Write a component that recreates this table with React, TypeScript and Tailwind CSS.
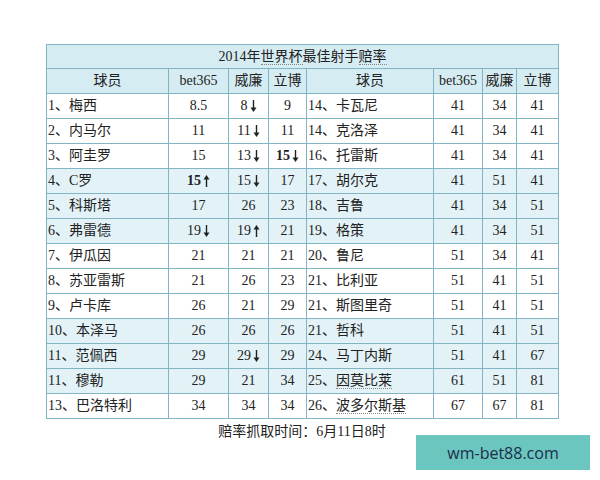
import React from 'react';

type Cell = { v: string; arrow?: 'up' | 'down'; bold?: boolean };
type Row = { name: string; dotted?: boolean; odds: Cell[] };

const c = (v: string, arrow?: 'up' | 'down', bold?: boolean): Cell => ({ v, arrow, bold });

const leftRows: Row[] = [
  { name: '1、梅西', odds: [c('8.5'), c('8', 'down'), c('9')] },
  { name: '2、内马尔', odds: [c('11'), c('11', 'down'), c('11')] },
  { name: '3、阿圭罗', odds: [c('15'), c('13', 'down'), c('15', 'down', true)] },
  { name: '4、C罗', odds: [c('15', 'up', true), c('15', 'down'), c('17')] },
  { name: '5、科斯塔', odds: [c('17'), c('26'), c('23')] },
  { name: '6、弗雷德', odds: [c('19', 'down'), c('19', 'up'), c('21')] },
  { name: '7、伊瓜因', odds: [c('21'), c('21'), c('21')] },
  { name: '8、苏亚雷斯', odds: [c('21'), c('26'), c('23')] },
  { name: '9、卢卡库', odds: [c('26'), c('21'), c('29')] },
  { name: '10、本泽马', odds: [c('26'), c('26'), c('26')] },
  { name: '11、范佩西', odds: [c('29'), c('29', 'down'), c('29')] },
  { name: '11、穆勒', odds: [c('29'), c('21'), c('34')] },
  { name: '13、巴洛特利', odds: [c('34'), c('34'), c('34')] },
];

const rightRows: Row[] = [
  { name: '14、卡瓦尼', odds: [c('41'), c('34'), c('41')] },
  { name: '14、克洛泽', odds: [c('41'), c('34'), c('41')] },
  { name: '16、托雷斯', odds: [c('41'), c('34'), c('41')] },
  { name: '17、胡尔克', odds: [c('41'), c('51'), c('41')] },
  { name: '18、吉鲁', odds: [c('41'), c('34'), c('51')] },
  { name: '19、格策', odds: [c('41'), c('34'), c('51')] },
  { name: '20、鲁尼', odds: [c('51'), c('34'), c('41')] },
  { name: '21、比利亚', odds: [c('51'), c('41'), c('51')] },
  { name: '21、斯图里奇', odds: [c('51'), c('41'), c('51')] },
  { name: '21、哲科', odds: [c('51'), c('41'), c('51')] },
  { name: '24、马丁内斯', odds: [c('51'), c('41'), c('67')] },
  { name: '25、因莫比莱', dotted: true, odds: [c('61'), c('51'), c('81')] },
  { name: '26、波多尔斯基', dotted: true, odds: [c('67'), c('67'), c('81')] },
];

const shaded = [3, 4, 5, 9, 10, 11];

const Arrow = ({ dir }: { dir: 'up' | 'down' }) => (
  <svg width="7" height="14" viewBox="0 0 7 14" className="inline-block ml-[2px] -mt-[2px] align-middle">
    {dir === 'down' ? (
      <>
        <path d="M3.5 1 V10" stroke="#222" strokeWidth="1.4" />
        <path d="M0.5 8.5 L3.5 13 L6.5 8.5 Z" fill="#222" />
      </>
    ) : (
      <>
        <path d="M3.5 4 V13" stroke="#222" strokeWidth="1.4" />
        <path d="M0.5 5.5 L3.5 1 L6.5 5.5 Z" fill="#222" />
      </>
    )}
  </svg>
);

const OddsCell = ({ cell }: { cell: Cell }) => (
  <td className={`border border-[#82b5c4] text-center ${cell.bold ? 'font-bold' : ''}`}>
    {cell.v}
    {cell.arrow && <Arrow dir={cell.arrow} />}
  </td>
);

const Name = ({ row }: { row: Row }) => {
  const idx = row.name.indexOf('、') + 1;
  return (
    <td className="border border-[#82b5c4] pl-[1px] text-left whitespace-nowrap">
      {row.name.slice(0, idx)}
      <span className={row.dotted ? 'border-b border-dotted border-[#888]' : ''}>{row.name.slice(idx)}</span>
    </td>
  );
};

export default function App() {
  return (
    <div className="w-[600px] h-[480px] bg-white relative font-['Liberation_Serif','Noto_Sans_CJK_SC',serif] text-[14px] text-[#222]">
      <div className="pt-[44px] pl-[46px]">
        <table className="border-collapse table-fixed w-[512px] leading-none">
          <colgroup>
            <col className="w-[122px]" />
            <col className="w-[60px]" />
            <col className="w-[40px]" />
            <col className="w-[38px]" />
            <col className="w-[127px]" />
            <col className="w-[49px]" />
            <col className="w-[34px]" />
            <col className="w-[42px]" />
          </colgroup>
          <tbody>
            <tr className="h-[24px] bg-[#d6ecf3]">
              <td colSpan={8} className="border border-[#82b5c4] text-center">
                2014年<span className="border-b border-dotted border-[#888]">世界杯</span>最佳射手<span className="border-b border-dotted border-[#888]">赔率</span>
              </td>
            </tr>
            <tr className="h-[25px] bg-[#d6ecf3] text-center">
              <td className="border border-[#82b5c4]">球员</td>
              <td className="border border-[#82b5c4]">bet365</td>
              <td className="border border-[#82b5c4]">威廉</td>
              <td className="border border-[#82b5c4]">立博</td>
              <td className="border border-[#82b5c4]">球员</td>
              <td className="border border-[#82b5c4]">bet365</td>
              <td className="border border-[#82b5c4]">威廉</td>
              <td className="border border-[#82b5c4]">立博</td>
            </tr>
            {leftRows.map((row, i) => (
              <tr key={i} className={`h-[25px] ${shaded.includes(i) ? 'bg-[#e3f2f7]' : 'bg-white'}`}>
                <Name row={row} />
                {row.odds.map((cell, j) => (
                  <OddsCell key={j} cell={cell} />
                ))}
                <Name row={rightRows[i]} />
                {rightRows[i].odds.map((cell, j) => (
                  <OddsCell key={j} cell={cell} />
                ))}
              </tr>
            ))}
          </tbody>
        </table>
        <div className="w-[512px] text-center mt-[2px]">赔率抓取时间：6月11日8时</div>
      </div>
      <div className="absolute left-[416px] top-[435px] w-[174px] h-[35px] bg-[#6cc6c0] flex items-center justify-center font-['Open_Sans',sans-serif] text-[16px] text-[#1b2f4a]">
        wm-bet88.com
      </div>
    </div>
  );
}
